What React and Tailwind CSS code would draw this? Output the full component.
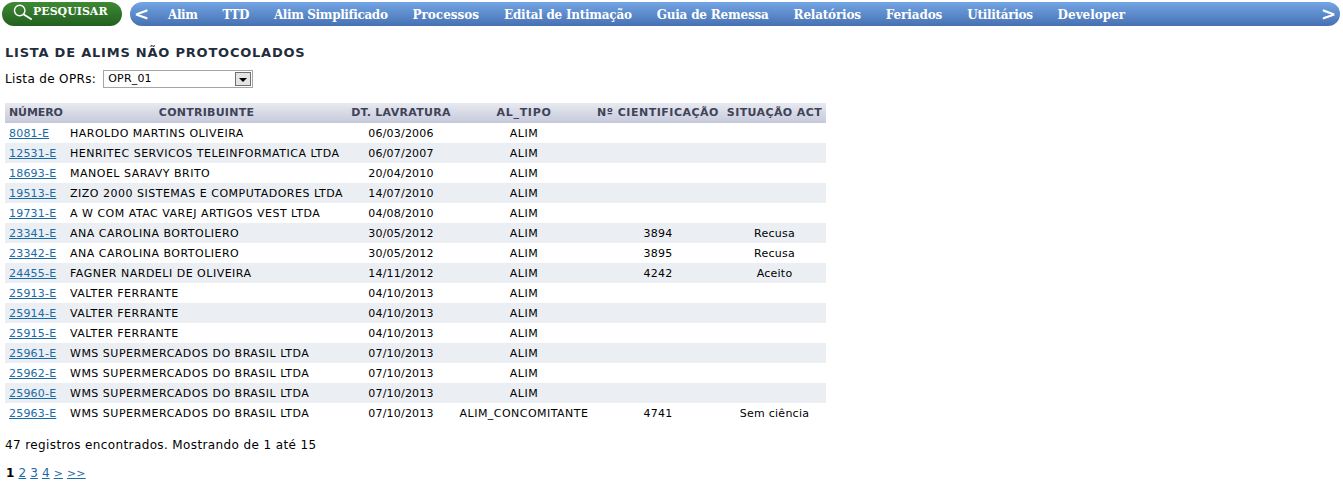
import React from 'react';

const menu = [
  ['Alim', 'tracking-[-0.4px]'],
  ['TTD', 'tracking-[-0.5px]'],
  ['Alim Simplificado', 'tracking-[-0.37px]'],
  ['Processos', 'tracking-[0px]'],
  ['Edital de Intimação', 'tracking-[-0.25px]'],
  ['Guia de Remessa', 'tracking-[-0.2px]'],
  ['Relatórios', 'tracking-[-0.2px]'],
  ['Feriados', 'tracking-[-0.1px]'],
  ['Utilitários', 'tracking-[-0.3px]'],
  ['Developer', 'tracking-[0px]'],
];

const rows = [
  ['8081-E', 'HAROLDO MARTINS OLIVEIRA', '06/03/2006', 'ALIM', '', ''],
  ['12531-E', 'HENRITEC SERVICOS TELEINFORMATICA LTDA', '06/07/2007', 'ALIM', '', ''],
  ['18693-E', 'MANOEL SARAVY BRITO', '20/04/2010', 'ALIM', '', ''],
  ['19513-E', 'ZIZO 2000 SISTEMAS E COMPUTADORES LTDA', '14/07/2010', 'ALIM', '', ''],
  ['19731-E', 'A W COM ATAC VAREJ ARTIGOS VEST LTDA', '04/08/2010', 'ALIM', '', ''],
  ['23341-E', 'ANA CAROLINA BORTOLIERO', '30/05/2012', 'ALIM', '3894', 'Recusa'],
  ['23342-E', 'ANA CAROLINA BORTOLIERO', '30/05/2012', 'ALIM', '3895', 'Recusa'],
  ['24455-E', 'FAGNER NARDELI DE OLIVEIRA', '14/11/2012', 'ALIM', '4242', 'Aceito'],
  ['25913-E', 'VALTER FERRANTE', '04/10/2013', 'ALIM', '', ''],
  ['25914-E', 'VALTER FERRANTE', '04/10/2013', 'ALIM', '', ''],
  ['25915-E', 'VALTER FERRANTE', '04/10/2013', 'ALIM', '', ''],
  ['25961-E', 'WMS SUPERMERCADOS DO BRASIL LTDA', '07/10/2013', 'ALIM', '', ''],
  ['25962-E', 'WMS SUPERMERCADOS DO BRASIL LTDA', '07/10/2013', 'ALIM', '', ''],
  ['25960-E', 'WMS SUPERMERCADOS DO BRASIL LTDA', '07/10/2013', 'ALIM', '', ''],
  ['25963-E', 'WMS SUPERMERCADOS DO BRASIL LTDA', '07/10/2013', 'ALIM_CONCOMITANTE', '4741', 'Sem ciência'],
];

const headers = [
  ['NÚMERO', 'pl-1 text-left tracking-[-0.1px]'],
  ['CONTRIBUINTE', 'text-center tracking-[0.25px]'],
  ['DT. LAVRATURA', 'text-center tracking-[0.3px]'],
  ['AL_TIPO', 'text-center tracking-[0.7px]'],
  ['Nº CIENTIFICAÇÃO', 'text-center tracking-[0.5px]'],
  ['SITUAÇÃO ACT', 'text-center tracking-[0.4px]'],
];

const pages = [
  ['2', 'text-[12px]'],
  ['3', 'text-[12px]'],
  ['4', 'text-[12px]'],
  ['>', 'text-[11px]'],
  ['>>', 'text-[11px]'],
];

function SearchIcon() {
  return (
    <svg width="20" height="18" viewBox="0 0 20 18" className="shrink-0">
      <circle cx="6.7" cy="6.5" r="5.2" fill="none" stroke="#fff" strokeWidth="1.4" />
      <path d="M10.8 10.5 L18 15" stroke="#fff" strokeWidth="2" strokeLinecap="round" />
    </svg>
  );
}

export default function App() {
  return (
    <div className="w-[1343px] h-[487px] overflow-hidden bg-white font-['DejaVu_Sans',sans-serif] text-[11px] text-black">
      {/* Top bar */}
      <div className="flex items-start gap-2 pl-[2px] pt-[2px] pr-[3px]">
        <button className="flex h-6 w-[120px] items-start rounded-full bg-gradient-to-b from-[#3f8a35] to-[#22601f] pl-[11px] pt-[2px] text-white">
          <SearchIcon />
          <span className="pt-[1px] font-['DejaVu_Serif',serif] text-[11px] font-bold leading-[14px]">PESQUISAR</span>
        </button>
        <div className="flex h-6 flex-1 items-center rounded-full bg-gradient-to-b from-[#74a5e4] to-[#4671b2] pl-[4px] pr-[4px] text-white">
          <span className="w-[34px] text-[18px] font-bold leading-none">&lt;</span>
          <nav className="flex flex-1 gap-[25px] pt-[1px] font-['DejaVu_Serif',serif] text-[12px] font-bold">
            {menu.map(([m, cls]) => <span key={m} className={cls}>{m}</span>)}
          </nav>
          <span className="text-[18px] font-bold leading-none">&gt;</span>
        </div>
      </div>

      {/* Content */}
      <div className="pl-[5px] pt-[19px]">
        <h1 className="text-[13px] font-bold leading-4 tracking-[0.78px] text-[#1f2d3d]">LISTA DE ALIMS NÃO PROTOCOLADOS</h1>
        <div className="mt-[9px] flex h-[18px] items-center gap-[7px]">
          <span className="text-[12px] tracking-[0.35px]">Lista de OPRs:</span>
          <div className="flex h-[18px] w-[150px] items-center justify-between border border-[#a5a5a5] pl-[4px]">
            <span className="tracking-[0.2px]">OPR_01</span>
            <span className="mr-[1px] flex h-[14px] w-4 items-center justify-center border border-[#707070] bg-[#e4e4e4]">
              <span className="mt-[2px] h-0 w-0 border-x-[4px] border-t-[4px] border-x-transparent border-t-black" />
            </span>
          </div>
        </div>

        <table className="mt-[15px] w-[821px] table-fixed border-collapse">
          <colgroup>
            <col className="w-[61px]" />
            <col className="w-[281px]" />
            <col className="w-[108px]" />
            <col className="w-[138px]" />
            <col className="w-[130px]" />
            <col className="w-[103px]" />
          </colgroup>
          <thead>
            <tr className="h-5 bg-gradient-to-b from-[#e8eaf0] to-[#c5c9db] text-[11px] font-bold text-[#3f4358]">
              {headers.map(([h, cls]) => (
                <th key={h} className={`whitespace-nowrap p-0 font-bold ${cls}`}>{h}</th>
              ))}
            </tr>
          </thead>
          <tbody>
            {rows.map((r, i) => (
              <tr key={r[0]} className={`h-5 ${i % 2 === 1 ? 'bg-[#ebeff4]' : ''}`}>
                <td className="whitespace-nowrap p-0 pl-1 pt-[3px] tracking-[0.2px]">
                  <a href="#" className="text-[#1a6aa5] underline">{r[0]}</a>
                </td>
                <td className="whitespace-nowrap p-0 pl-1 pt-[3px] tracking-[0.5px]">{r[1]}</td>
                <td className="p-0 pt-[3px] text-center tracking-[0.2px]">{r[2]}</td>
                <td className="whitespace-nowrap p-0 pt-[3px] text-center tracking-[0.47px]">{r[3]}</td>
                <td className="p-0 pt-[3px] text-center tracking-[0.2px]">{r[4]}</td>
                <td className="p-0 pt-[3px] text-center tracking-[0.25px]">{r[5]}</td>
              </tr>
            ))}
          </tbody>
        </table>

        <p className="mt-[15px] text-[12px] leading-[14px] tracking-[0.38px]">47 registros encontrados. Mostrando de 1 até 15</p>
        <p className="mt-[14px] flex items-baseline gap-[4px] pl-[1px] text-[12px] leading-[14px] tracking-[0.1px]">
          <b>1</b>
          {pages.map(([p, cls]) => (
            <a key={p} href="#" className={`text-[#1a6aa5] underline ${cls}`}>{p}</a>
          ))}
        </p>
      </div>
    </div>
  );
}
